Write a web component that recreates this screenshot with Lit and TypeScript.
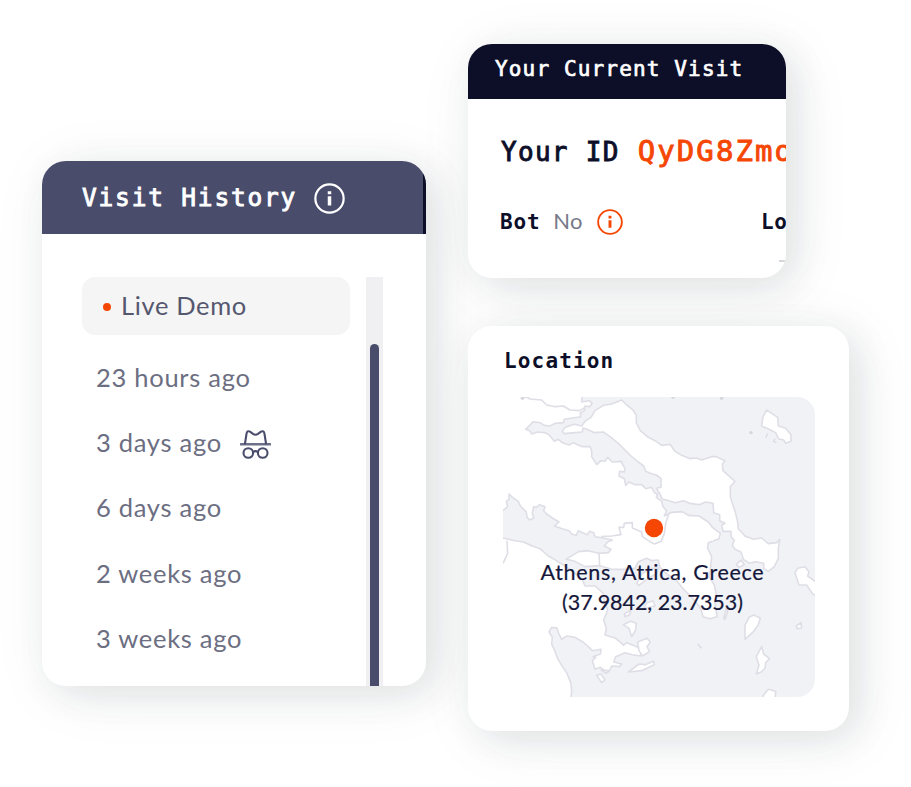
import { LitElement, html, svg, css } from "lit";
import { customElement, property } from "lit/decorators.js";

interface Visit {
  label: string;
  incognito?: boolean;
}

const VISITS: Visit[] = [
  { label: "23 hours ago" },
  { label: "3 days ago", incognito: true },
  { label: "6 days ago" },
  { label: "2 weeks ago" },
  { label: "3 weeks ago" },
];

// Open water: Euboean gulf, Aegean, Saronic, Argolic and Corinthian gulfs.
const SEA =
  "M262 10L260 36 282 32 292 40 284 50 270 48 268 62 255 70 258 80 232 84 208 88 205 98 180 100 165 108 148 106 135 98 115 95 106 104 92 118 104 122 110 132 128 126 150 128 162 134 178 154 190 148 202 158 222 165 235 158 262 170 285 170 290 182 290 200 305 224 318 212 330 214 338 202 352 216 378 214 390 236 388 246 374 244 372 258 388 266 392 286 402 276 420 284 440 284 452 296 470 292 478 308 488 312 484 322 500 334 504 350 515 362 508 378 530 367 562 365 580 376 612 378 640 396 652 412 676 430 672 446 640 458 638 475 650 500 646 540 642 560 658 585 664 615 660 640 666 680 645 686 624 680 620 664 614 650 590 622 565 597 545 572 515 552 495 532 490 510 470 512 455 505 430 515 420 535 390 538 350 538 315 527 270 530 240 514 213 508 232 496 250 485 280 482 310 490 340 488 348 478 328 468 338 456 352 450 320 443 300 440 296 428 284 424 276 434 250 422 244 436 230 432 222 422 202 416 178 408 192 396 172 384 155 372 146 362 150 350 134 344 124 352 116 350 112 370 116 384 104 390 96 382 94 366 76 348 70 334 55 324 42 312 42 328 34 334 38 350 24 362 10 362 10 444 24 444 60 452 85 456 112 468 135 476 160 498 184 512 225 538 262 568 270 588 300 588 325 610 328 635 338 660 326 690 334 715 330 735 362 745 380 760 385 766 396 758 425 770 440 782 436 798 412 794 390 788 362 800 356 816 380 822 374 830 350 828 342 846 330 842 316 832 300 838 292 812 302 802 294 800 316 792 318 778 292 782 278 768 264 756 240 742 215 738 200 748 190 728 186 714 170 712 162 726 172 742 170 762 180 784 188 806 200 826 216 850 228 880 230 905 226 940 980 940 980 10Z";

const EUBOEA =
  "M380 30L395 45 412 58 424 75 424 98 436 122 460 142 480 152 500 166 525 163 540 184 560 196 585 206 605 204 620 210 650 200 664 200 690 212 682 222 684 242 700 256 720 274 706 290 706 320 714 346 722 370 728 396 730 416 750 438 775 448 800 444 820 461 845 458 854 448 850 475 850 505 838 530 820 544 806 536 806 520 780 515 765 520 745 508 738 486 720 478 712 465 718 450 708 440 708 424 684 424 680 405 690 400 674 392 674 374 656 368 654 340 632 336 612 344 584 340 565 332 540 338 515 330 502 328 494 310 484 295 498 292 498 265 484 255 466 250 452 244 446 228 430 216 408 198 390 180 370 160 345 140 325 126 298 128 276 118 264 114 262 126 240 128 208 131 202 124 210 112 238 103 260 108 270 94 288 82 300 62 325 46 350 42Z";

const ISLANDS = [
  "M815 60L848 82 850 108 872 115 888 134 888 154 872 160 866 150 850 146 842 128 822 118 800 108 804 80Z",
  "M900 548L908 535 930 530 942 545 938 558 975 585 975 630 952 610 935 585 912 585Z",
  "M750 748L750 706 762 682 776 675 796 684 790 704 776 724Z",
  "M800 770L806 792 824 806 812 818 810 834 800 845 784 852 792 826 784 800Z",
  "M805 940L805 916 820 898 842 904 840 940Z",
  "M904 708L918 698 920 714 906 716Z",
  "M385 704L406 694 424 700 422 720 410 740 402 715Z",
  "M428 756L456 745 466 756 456 770 464 785 442 798 432 782Z",
  "M400 846L432 822 450 824 476 814 478 824 440 842Z",
  "M305 856L318 852 330 870 320 878Z",
  "M318 840L340 842 334 850Z",
  "M388 672L408 660 404 674 390 680Z",
  "M425 580L440 552 462 536 490 534 485 550 450 572 432 586Z",
  "M446 656L454 640 474 632 480 648Z",
  "M686 686L694 655 698 665 690 688Z",
  "M732 532L724 524 738 510 748 524Z",
];

const BORDERS =
  "M80 25L95 21 105 27 140 30 155 45 180 50 205 48 225 60 255 62 270 52M318 440L350 438 378 434 372 412 386 412 388 400 412 398 412 414 440 426 442 440 460 452 478 462 498 454 508 430 512 400 522 370M312 488L314 528M36 452L38 490 24 520M608 762L620 775M818 130l-6 14M840 146l-4 8 8 4";

const SPECKS = [
  [768, 128],
  [680, 25],
  [534, 22],
  [82, 25],
];

@customElement("info-icon")
export class InfoIcon extends LitElement {
  @property({ type: Number }) size = 31;

  static styles = css`
    :host { display: block; flex: none; }
    svg { display: block; }
  `;

  render() {
    return html`<svg width=${this.size} height=${this.size} viewBox="0 0 32 32" fill="none" stroke="currentColor">
      <circle cx="16" cy="16" r="14.6" stroke-width="2.3" />
      <path d="M16 13.8V23.2" stroke-width="3.6" />
      <path d="M16 8.4v3.2" stroke-width="3.6" />
    </svg>`;
  }
}

@customElement("region-map")
export class RegionMap extends LitElement {
  static styles = css`
    :host { display: block; }
    .map { display: block; width: 312px; height: 300px; border-radius: 18px; }
    .sea { fill: #f1f2f6; stroke: #dfdee6; }
    .land { fill: #fff; stroke: #dfdee6; }
    .border { fill: none; stroke: #dfdee6; }
    .coast { stroke-width: 4.8; stroke-linejoin: round; }
  `;

  render() {
    return html`<svg class="map" viewBox="24 21 936 900">
      <filter id="rough" filterUnits="userSpaceOnUse" x="0" y="0" width="990" height="950">
        <feTurbulence type="fractalNoise" baseFrequency="0.16" numOctaves="2" seed="4" />
        <feDisplacementMap in="SourceGraphic" scale="4" xChannelSelector="R" yChannelSelector="G" />
      </filter>
      <rect x="0" y="0" width="990" height="950" fill="#fff" />
      <g class="coast" filter="url(#rough)">
        <path class="sea" d=${SEA} />
        <path class="land" d=${EUBOEA} />
        ${ISLANDS.map((d) => svg`<path class="land" d=${d} />`)}
        <path class="border" d=${BORDERS} />
      </g>
      ${SPECKS.map(([x, y]) => svg`<circle cx=${x} cy=${y} r="5" fill="#d6d6df" />`)}
      <circle cx="477" cy="414" r="27.5" fill="#f54703" />
    </svg>`;
  }
}

@customElement("app-root")
export class AppRoot extends LitElement {
  static styles = css`
    :host {
      display: block;
      width: 911px;
      height: 787px;
      overflow: hidden;
      background: #fff;
      font-family: Lato, "Open Sans", sans-serif;
    }
    * { box-sizing: border-box; }
    .board { display: flex; gap: 42px; padding: 44px 0 0 42px; }
    .column { display: flex; flex-direction: column; gap: 48px; }
    .card {
      border-radius: 24px;
      background: #fff;
      overflow: hidden;
      box-shadow: 10px 8px 36px rgba(24, 26, 34, 0.09), 8px 8px 64px rgba(30, 50, 50, 0.07);
    }
    .mono {
      font-family: "DejaVu Sans Mono", monospace;
      white-space: pre;
      line-height: 1;
      -webkit-text-stroke: 0.9px currentColor;
    }
    .history { width: 384px; height: 525px; margin-top: 117px; display: flex; flex-direction: column; }
    .history-head {
      height: 73px;
      flex: none;
      display: flex;
      align-items: center;
      gap: 17px;
      padding: 1px 0 0 40px;
      background: #494c6b;
      border-right: 3px solid #0d0f29;
      color: #fff;
    }
    .history-title { font-size: 24.5px; letter-spacing: 1.8px; }
    .history-body { flex: 1; display: flex; padding: 43px 43px 0 40px; gap: 16px; min-height: 0; }
    .visits { width: 268px; display: flex; flex-direction: column; }
    .live {
      height: 58px;
      margin-bottom: 10px;
      display: flex;
      align-items: center;
      gap: 10px;
      padding: 0 0 3px 21px;
      border-radius: 13px;
      background: #f5f5f5;
      color: #55576f;
      font-size: 25.5px;
      letter-spacing: 0.65px;
    }
    .dot { width: 8px; height: 8px; margin-top: 4px; border-radius: 50%; background: #f54703; }
    .visit {
      height: 65.3px;
      flex: none;
      display: flex;
      align-items: center;
      gap: 18px;
      padding: 0 0 2px 14px;
      color: #6c6e82;
      font-size: 25.5px;
      letter-spacing: 0.72px;
      white-space: nowrap;
    }
    .incognito { display: block; margin-top: 5px; }
    .track { width: 17px; padding: 67px 4px 0; background: #f0f0f2; }
    .thumb { height: 100%; border-radius: 5px 5px 0 0; background: #494c6b; }
    .current { width: 318px; height: 234px; }
    .current-head { height: 55px; padding: 15px 0 0 27px; background: #0d0f29; color: #fff; }
    .current-title { font-size: 21px; letter-spacing: 1.15px; -webkit-text-stroke-width: 0.7px; }
    .ident { display: flex; align-items: baseline; gap: 18px; padding: 38px 0 0 33px; color: #0d0f29; }
    .ident-label { font-size: 26px; letter-spacing: 1.3px; }
    .ident-value { font-size: 29px; letter-spacing: 2.1px; color: #f54703; }
    .facts { display: flex; align-items: center; padding: 42px 0 0 32px; color: #0d0f29; }
    .strong { font-weight: 700; font-size: 21px; letter-spacing: 0.8px; color: #0d0f29; -webkit-text-stroke-width: 0; }
    .answer { margin: 0 14px 2px 13px; font-size: 22px; line-height: 26px; letter-spacing: 0.3px; color: #777989; }
    .warn { color: #f54703; margin-right: 138px; }
    .clip-mark { width: 8px; height: 2px; margin: 24px 0 0 311px; background: #d6d6dd; }
    .location { width: 381px; height: 405px; padding: 25px 0 0 36px; }
    .location .strong { letter-spacing: 1.15px; }
    .map-wrap { display: grid; width: 312px; margin: 25px 0 0 -1px; }
    .map-wrap > * { grid-area: 1 / 1; }
    .place {
      padding-top: 160px;
      text-align: center;
      font-size: 21.5px;
      line-height: 30px;
      letter-spacing: 0.68px;
      color: #14163a;
      z-index: 1;
      margin-left: -13px;
      -webkit-text-stroke: 0.2px currentColor;
    }
    .coords { letter-spacing: -0.05px; }
  `;

  private incognitoIcon() {
    return html`<svg class="incognito" width="31" height="29" viewBox="0 0 31 29" fill="none" stroke="#494c6b"
      stroke-width="2.1" stroke-linecap="round" stroke-linejoin="round">
      <path d="M0.8 14.2h29.4" stroke-width="2.4" stroke="#6d7089" />
      <path d="M5 13.5L6.5 3.8C6.8 1.3 8.2 .6 10 1.7L13 3.9C14.6 5 16.4 5 18 3.9L21 1.7C22.8 .6 24.2 1.3 24.5 3.8L26 13.5" />
      <circle cx="8.3" cy="23" r="4.8" />
      <circle cx="22.7" cy="23" r="4.8" />
      <path d="M13.2 22c1.3-1 3.3-1 4.6 0" />
    </svg>`;
  }

  render() {
    return html`<main class="board">
      <section class="card history">
        <header class="history-head">
          <span class="mono history-title">Visit History</span>
          <info-icon .size=${31}></info-icon>
        </header>
        <div class="history-body">
          <div class="visits">
            <div class="live"><i class="dot"></i><span>Live Demo</span></div>
            ${VISITS.map(
              (v) => html`<div class="visit"><span>${v.label}</span>${v.incognito ? this.incognitoIcon() : ""}</div>`
            )}
          </div>
          <div class="track"><div class="thumb"></div></div>
        </div>
      </section>
      <div class="column">
        <section class="card current">
          <header class="current-head"><div class="mono current-title">Your Current Visit</div></header>
          <div class="ident">
            <span class="mono ident-label">Your ID</span>
            <span class="mono ident-value">QyDG8Zmo</span>
          </div>
          <div class="facts">
            <span class="mono strong">Bot</span>
            <span class="answer">No</span>
            <info-icon class="warn" .size=${26}></info-icon>
            <span class="mono strong">Lo</span>
          </div>
          <div class="clip-mark"></div>
        </section>
        <section class="card location">
          <div class="mono strong">Location</div>
          <div class="map-wrap">
            <region-map></region-map>
            <div class="place">Athens, Attica, Greece<br /><span class="coords">(37.9842, 23.7353)</span></div>
          </div>
        </section>
      </div>
    </main>`;
  }
}
